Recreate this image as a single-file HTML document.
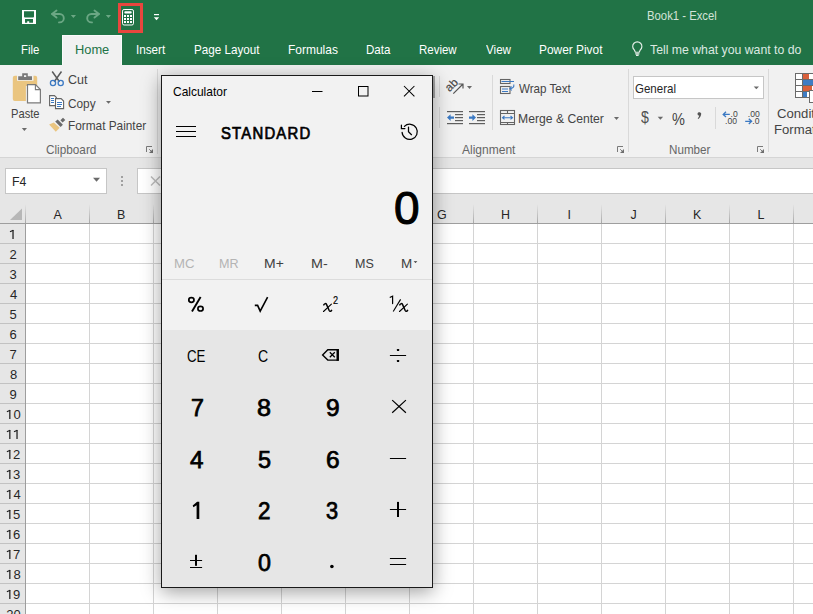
<!DOCTYPE html>
<html><head><meta charset="utf-8"><style>
*{margin:0;padding:0;box-sizing:border-box}
html,body{width:813px;height:614px;overflow:hidden;background:#fff;font-family:"Liberation Sans",sans-serif}
.a{position:absolute}
.t{position:absolute;white-space:nowrap;line-height:1;transform-origin:0 0}
</style></head><body>
<div class="a" style="left:0;top:0;width:813px;height:65px;background:#217346"></div>
<div class="a" style="left:62px;top:35px;width:60px;height:30px;background:#f1f1f1;border:1px solid #fafafa;border-bottom:0"></div>
<div class="a" style="left:0;top:65px;width:813px;height:93px;background:#f1f1f1;border-bottom:1px solid #d5d5d5"></div>
<div class="a" style="left:433px;top:76px;width:2px;height:22px;background:#a6a6a6"></div>
<div class="a" style="left:157px;top:69px;width:1px;height:85px;background:#d9d9d9"></div>
<div class="a" style="left:439px;top:76px;width:1px;height:21px;background:#d9d9d9"></div>
<div class="a" style="left:439px;top:107px;width:1px;height:21px;background:#d9d9d9"></div>
<div class="a" style="left:492px;top:75px;width:1px;height:55px;background:#d9d9d9"></div>
<div class="a" style="left:628px;top:69px;width:1px;height:83px;background:#d9d9d9"></div>
<div class="a" style="left:715px;top:107px;width:1px;height:22px;background:#d9d9d9"></div>
<div class="a" style="left:768px;top:69px;width:1px;height:83px;background:#d9d9d9"></div>
<div class="a" style="left:0;top:158px;width:813px;height:46px;background:#e6e6e6"></div>
<div class="a" style="left:5px;top:168px;width:102px;height:26px;background:#fff;border:1px solid #c6c6c6"></div>
<div class="a" style="left:137px;top:168px;width:690px;height:26px;background:#fff;border:1px solid #c6c6c6"></div>
<div class="a" style="left:633px;top:76px;width:131px;height:23px;background:#fff;border:1px solid #c6c6c6"></div>
<div class="a" style="left:0;top:204px;width:813px;height:20px;background:#e6e6e6;border-bottom:1px solid #9e9e9e"></div>
<div class="a" style="left:0;top:224px;width:26px;height:390px;background:#e6e6e6;border-right:1px solid #9e9e9e"></div>
<div class="a" style="left:89px;top:224px;width:1px;height:390px;background:#d4d4d4"></div>
<div class="a" style="left:89px;top:204px;width:1px;height:19px;background:linear-gradient(#e6e6e6,#a8a8a8)"></div>
<div class="a" style="left:153px;top:224px;width:1px;height:390px;background:#d4d4d4"></div>
<div class="a" style="left:153px;top:204px;width:1px;height:19px;background:linear-gradient(#e6e6e6,#a8a8a8)"></div>
<div class="a" style="left:217px;top:224px;width:1px;height:390px;background:#d4d4d4"></div>
<div class="a" style="left:217px;top:204px;width:1px;height:19px;background:linear-gradient(#e6e6e6,#a8a8a8)"></div>
<div class="a" style="left:281px;top:224px;width:1px;height:390px;background:#d4d4d4"></div>
<div class="a" style="left:281px;top:204px;width:1px;height:19px;background:linear-gradient(#e6e6e6,#a8a8a8)"></div>
<div class="a" style="left:345px;top:224px;width:1px;height:390px;background:#d4d4d4"></div>
<div class="a" style="left:345px;top:204px;width:1px;height:19px;background:linear-gradient(#e6e6e6,#a8a8a8)"></div>
<div class="a" style="left:409px;top:224px;width:1px;height:390px;background:#d4d4d4"></div>
<div class="a" style="left:409px;top:204px;width:1px;height:19px;background:linear-gradient(#e6e6e6,#a8a8a8)"></div>
<div class="a" style="left:473px;top:224px;width:1px;height:390px;background:#d4d4d4"></div>
<div class="a" style="left:473px;top:204px;width:1px;height:19px;background:linear-gradient(#e6e6e6,#a8a8a8)"></div>
<div class="a" style="left:537px;top:224px;width:1px;height:390px;background:#d4d4d4"></div>
<div class="a" style="left:537px;top:204px;width:1px;height:19px;background:linear-gradient(#e6e6e6,#a8a8a8)"></div>
<div class="a" style="left:601px;top:224px;width:1px;height:390px;background:#d4d4d4"></div>
<div class="a" style="left:601px;top:204px;width:1px;height:19px;background:linear-gradient(#e6e6e6,#a8a8a8)"></div>
<div class="a" style="left:665px;top:224px;width:1px;height:390px;background:#d4d4d4"></div>
<div class="a" style="left:665px;top:204px;width:1px;height:19px;background:linear-gradient(#e6e6e6,#a8a8a8)"></div>
<div class="a" style="left:729px;top:224px;width:1px;height:390px;background:#d4d4d4"></div>
<div class="a" style="left:729px;top:204px;width:1px;height:19px;background:linear-gradient(#e6e6e6,#a8a8a8)"></div>
<div class="a" style="left:793px;top:224px;width:1px;height:390px;background:#d4d4d4"></div>
<div class="a" style="left:793px;top:204px;width:1px;height:19px;background:linear-gradient(#e6e6e6,#a8a8a8)"></div>
<div class="a" style="left:26px;top:243px;width:787px;height:1px;background:#d4d4d4"></div>
<div class="a" style="left:0;top:243px;width:25px;height:1px;background:#c2c2c2"></div>
<div class="a" style="left:26px;top:263px;width:787px;height:1px;background:#d4d4d4"></div>
<div class="a" style="left:0;top:263px;width:25px;height:1px;background:#c2c2c2"></div>
<div class="a" style="left:26px;top:283px;width:787px;height:1px;background:#d4d4d4"></div>
<div class="a" style="left:0;top:283px;width:25px;height:1px;background:#c2c2c2"></div>
<div class="a" style="left:26px;top:303px;width:787px;height:1px;background:#d4d4d4"></div>
<div class="a" style="left:0;top:303px;width:25px;height:1px;background:#c2c2c2"></div>
<div class="a" style="left:26px;top:323px;width:787px;height:1px;background:#d4d4d4"></div>
<div class="a" style="left:0;top:323px;width:25px;height:1px;background:#c2c2c2"></div>
<div class="a" style="left:26px;top:343px;width:787px;height:1px;background:#d4d4d4"></div>
<div class="a" style="left:0;top:343px;width:25px;height:1px;background:#c2c2c2"></div>
<div class="a" style="left:26px;top:363px;width:787px;height:1px;background:#d4d4d4"></div>
<div class="a" style="left:0;top:363px;width:25px;height:1px;background:#c2c2c2"></div>
<div class="a" style="left:26px;top:383px;width:787px;height:1px;background:#d4d4d4"></div>
<div class="a" style="left:0;top:383px;width:25px;height:1px;background:#c2c2c2"></div>
<div class="a" style="left:26px;top:403px;width:787px;height:1px;background:#d4d4d4"></div>
<div class="a" style="left:0;top:403px;width:25px;height:1px;background:#c2c2c2"></div>
<div class="a" style="left:26px;top:423px;width:787px;height:1px;background:#d4d4d4"></div>
<div class="a" style="left:0;top:423px;width:25px;height:1px;background:#c2c2c2"></div>
<div class="a" style="left:26px;top:443px;width:787px;height:1px;background:#d4d4d4"></div>
<div class="a" style="left:0;top:443px;width:25px;height:1px;background:#c2c2c2"></div>
<div class="a" style="left:26px;top:463px;width:787px;height:1px;background:#d4d4d4"></div>
<div class="a" style="left:0;top:463px;width:25px;height:1px;background:#c2c2c2"></div>
<div class="a" style="left:26px;top:483px;width:787px;height:1px;background:#d4d4d4"></div>
<div class="a" style="left:0;top:483px;width:25px;height:1px;background:#c2c2c2"></div>
<div class="a" style="left:26px;top:503px;width:787px;height:1px;background:#d4d4d4"></div>
<div class="a" style="left:0;top:503px;width:25px;height:1px;background:#c2c2c2"></div>
<div class="a" style="left:26px;top:523px;width:787px;height:1px;background:#d4d4d4"></div>
<div class="a" style="left:0;top:523px;width:25px;height:1px;background:#c2c2c2"></div>
<div class="a" style="left:26px;top:543px;width:787px;height:1px;background:#d4d4d4"></div>
<div class="a" style="left:0;top:543px;width:25px;height:1px;background:#c2c2c2"></div>
<div class="a" style="left:26px;top:563px;width:787px;height:1px;background:#d4d4d4"></div>
<div class="a" style="left:0;top:563px;width:25px;height:1px;background:#c2c2c2"></div>
<div class="a" style="left:26px;top:583px;width:787px;height:1px;background:#d4d4d4"></div>
<div class="a" style="left:0;top:583px;width:25px;height:1px;background:#c2c2c2"></div>
<div class="a" style="left:26px;top:603px;width:787px;height:1px;background:#d4d4d4"></div>
<div class="a" style="left:0;top:603px;width:25px;height:1px;background:#c2c2c2"></div>
<div class="a" style="left:26px;top:623px;width:787px;height:1px;background:#d4d4d4"></div>
<div class="a" style="left:0;top:623px;width:25px;height:1px;background:#c2c2c2"></div>
<div class="a" style="left:25px;top:204px;width:1px;height:19px;background:linear-gradient(#e6e6e6,#a8a8a8)"></div>
<svg class="a" style="left:0;top:228px" width="25" height="13"><rect x="12.4" y="2" width="1.25" height="9" fill="#1e1e1e"/><path d="M10.0 3.8L13.3 2.2" stroke="#1e1e1e" stroke-width="1.15"/></svg>
<svg class="a" style="left:0;top:408px" width="25" height="13"><rect x="9.2" y="2" width="1.25" height="9" fill="#1e1e1e"/><path d="M6.9 3.8L10.1 2.2" stroke="#1e1e1e" stroke-width="1.15"/></svg>
<svg class="a" style="left:0;top:428px" width="25" height="13"><rect x="9.2" y="2" width="1.25" height="9" fill="#1e1e1e"/><path d="M6.9 3.8L10.1 2.2" stroke="#1e1e1e" stroke-width="1.15"/></svg>
<svg class="a" style="left:0;top:428px" width="25" height="13"><rect x="16.4" y="2" width="1.25" height="9" fill="#1e1e1e"/><path d="M14.0 3.8L17.299999999999997 2.2" stroke="#1e1e1e" stroke-width="1.15"/></svg>
<svg class="a" style="left:0;top:448px" width="25" height="13"><rect x="9.2" y="2" width="1.25" height="9" fill="#1e1e1e"/><path d="M6.9 3.8L10.1 2.2" stroke="#1e1e1e" stroke-width="1.15"/></svg>
<svg class="a" style="left:0;top:468px" width="25" height="13"><rect x="9.2" y="2" width="1.25" height="9" fill="#1e1e1e"/><path d="M6.9 3.8L10.1 2.2" stroke="#1e1e1e" stroke-width="1.15"/></svg>
<svg class="a" style="left:0;top:488px" width="25" height="13"><rect x="9.2" y="2" width="1.25" height="9" fill="#1e1e1e"/><path d="M6.9 3.8L10.1 2.2" stroke="#1e1e1e" stroke-width="1.15"/></svg>
<svg class="a" style="left:0;top:508px" width="25" height="13"><rect x="9.2" y="2" width="1.25" height="9" fill="#1e1e1e"/><path d="M6.9 3.8L10.1 2.2" stroke="#1e1e1e" stroke-width="1.15"/></svg>
<svg class="a" style="left:0;top:528px" width="25" height="13"><rect x="9.2" y="2" width="1.25" height="9" fill="#1e1e1e"/><path d="M6.9 3.8L10.1 2.2" stroke="#1e1e1e" stroke-width="1.15"/></svg>
<svg class="a" style="left:0;top:548px" width="25" height="13"><rect x="9.2" y="2" width="1.25" height="9" fill="#1e1e1e"/><path d="M6.9 3.8L10.1 2.2" stroke="#1e1e1e" stroke-width="1.15"/></svg>
<svg class="a" style="left:0;top:568px" width="25" height="13"><rect x="9.2" y="2" width="1.25" height="9" fill="#1e1e1e"/><path d="M6.9 3.8L10.1 2.2" stroke="#1e1e1e" stroke-width="1.15"/></svg>
<svg class="a" style="left:0;top:588px" width="25" height="13"><rect x="9.2" y="2" width="1.25" height="9" fill="#1e1e1e"/><path d="M6.9 3.8L10.1 2.2" stroke="#1e1e1e" stroke-width="1.15"/></svg>
<svg class="a" style="left:0;top:204px" width="26" height="20"><polygon points="22,4.5 22,16 10,16" fill="#b7b7b7"/></svg>
<div class="t" style="left:646.92px;top:9.80px;font-size:12.9px;transform:scaleX(0.878);color:#d3e3d8;">Book1 - Excel</div>
<div class="t" style="left:20.62px;top:43.20px;font-size:13.04px;transform:scaleX(0.875);color:#ffffff;">File</div>
<div class="t" style="left:136.40px;top:43.20px;font-size:13.04px;transform:scaleX(0.897);color:#ffffff;">Insert</div>
<div class="t" style="left:194.10px;top:43.20px;font-size:13.04px;transform:scaleX(0.896);color:#ffffff;">Page Layout</div>
<div class="t" style="left:288.08px;top:43.20px;font-size:13.04px;transform:scaleX(0.919);color:#ffffff;">Formulas</div>
<div class="t" style="left:366.11px;top:43.20px;font-size:13.04px;transform:scaleX(0.889);color:#ffffff;">Data</div>
<div class="t" style="left:419.12px;top:43.20px;font-size:13.04px;transform:scaleX(0.881);color:#ffffff;">Review</div>
<div class="t" style="left:486.00px;top:43.20px;font-size:13.04px;transform:scaleX(0.893);color:#ffffff;">View</div>
<div class="t" style="left:539.09px;top:43.20px;font-size:13.04px;transform:scaleX(0.913);color:#ffffff;">Power Pivot</div>
<div class="t" style="left:74.52px;top:43.00px;font-size:13.04px;transform:scaleX(0.985);color:#217346;">Home</div>
<div class="t" style="left:649.50px;top:43.20px;font-size:13.04px;transform:scaleX(0.941);color:#dde9e1;">Tell me what you want to do</div>
<div class="t" style="left:10.74px;top:107.00px;font-size:13.04px;transform:scaleX(0.856);color:#444444;">Paste</div>
<div class="t" style="left:67.64px;top:73.00px;font-size:13.04px;transform:scaleX(0.958);color:#444444;">Cut</div>
<div class="t" style="left:67.69px;top:96.50px;font-size:13.04px;transform:scaleX(0.907);color:#444444;">Copy</div>
<div class="t" style="left:67.69px;top:119.40px;font-size:13.04px;transform:scaleX(0.907);color:#444444;">Format Painter</div>
<div class="t" style="left:45.60px;top:143.50px;font-size:12.32px;transform:scaleX(0.956);color:#666666;">Clipboard</div>
<div class="t" style="left:519.00px;top:81.50px;font-size:13.04px;transform:scaleX(0.891);color:#444444;">Wrap Text</div>
<div class="t" style="left:518.07px;top:112.00px;font-size:13.04px;transform:scaleX(0.934);color:#444444;">Merge &amp; Center</div>
<div class="t" style="left:462.00px;top:144.00px;font-size:12.03px;color:#666666;">Alignment</div>
<div class="t" style="left:635.12px;top:81.50px;font-size:13.04px;transform:scaleX(0.884);color:#262626;">General</div>
<div class="t" style="left:669.33px;top:144.00px;font-size:12.03px;transform:scaleX(0.969);color:#666666;">Number</div>
<div class="t" style="left:777.37px;top:108.30px;font-size:12.75px;transform:scaleX(1.030);color:#444444;">Condit</div>
<div class="t" style="left:774.37px;top:124.00px;font-size:12.75px;transform:scaleX(1.030);color:#444444;">Format</div>
<div class="t" style="left:640.70px;top:109.20px;font-size:16.5px;transform:scaleX(0.856);color:#505050;">$</div>
<div class="t" style="left:672.20px;top:110.50px;font-size:17.25px;transform:scaleX(0.840);color:#444444;">%</div>
<div class="t" style="left:11.54px;top:176.20px;font-size:12.75px;transform:scaleX(0.964);color:#262626;">F4</div>
<div class="t" style="left:53.50px;top:208.60px;font-size:12.46px;color:#262626;">A</div>
<div class="t" style="left:117.00px;top:208.60px;font-size:12.46px;color:#262626;">B</div>
<div class="t" style="left:181.50px;top:208.60px;font-size:12.46px;color:#262626;">C</div>
<div class="t" style="left:244.50px;top:208.60px;font-size:12.46px;color:#262626;">D</div>
<div class="t" style="left:309.00px;top:208.60px;font-size:12.46px;color:#262626;">E</div>
<div class="t" style="left:373.50px;top:208.60px;font-size:12.46px;color:#262626;">F</div>
<div class="t" style="left:437.00px;top:208.60px;font-size:12.46px;color:#262626;">G</div>
<div class="t" style="left:501.00px;top:208.60px;font-size:12.46px;color:#262626;">H</div>
<div class="t" style="left:567.50px;top:208.60px;font-size:12.46px;color:#262626;">I</div>
<div class="t" style="left:630.50px;top:208.60px;font-size:12.46px;color:#262626;">J</div>
<div class="t" style="left:693.00px;top:208.60px;font-size:12.46px;color:#262626;">K</div>
<div class="t" style="left:757.50px;top:208.60px;font-size:12.46px;color:#262626;">L</div>
<div class="t" style="left:820.00px;top:208.60px;font-size:12.46px;color:#262626;">M</div>
<div class="t" style="left:9.50px;top:248.00px;font-size:13.04px;color:#262626;">2</div>
<div class="t" style="left:9.50px;top:268.00px;font-size:13.04px;color:#262626;">3</div>
<div class="t" style="left:10.00px;top:288.00px;font-size:13.04px;color:#262626;">4</div>
<div class="t" style="left:9.50px;top:308.00px;font-size:13.04px;color:#262626;">5</div>
<div class="t" style="left:9.50px;top:328.00px;font-size:13.04px;color:#262626;">6</div>
<div class="t" style="left:9.50px;top:348.00px;font-size:13.04px;color:#262626;">7</div>
<div class="t" style="left:10.00px;top:368.00px;font-size:13.04px;color:#262626;">8</div>
<div class="t" style="left:9.50px;top:388.00px;font-size:13.04px;color:#262626;">9</div>
<div class="t" style="left:13.40px;top:408.00px;font-size:13.04px;color:#262626;">0</div>
<div class="t" style="left:12.90px;top:448.00px;font-size:13.04px;color:#262626;">2</div>
<div class="t" style="left:12.90px;top:468.00px;font-size:13.04px;color:#262626;">3</div>
<div class="t" style="left:13.40px;top:488.00px;font-size:13.04px;color:#262626;">4</div>
<div class="t" style="left:12.90px;top:508.00px;font-size:13.04px;color:#262626;">5</div>
<div class="t" style="left:12.90px;top:528.00px;font-size:13.04px;color:#262626;">6</div>
<div class="t" style="left:12.90px;top:548.00px;font-size:13.04px;color:#262626;">7</div>
<div class="t" style="left:13.40px;top:568.00px;font-size:13.04px;color:#262626;">8</div>
<div class="t" style="left:12.90px;top:588.00px;font-size:13.04px;color:#262626;">9</div>
<div class="t" style="left:6.20px;top:608.00px;font-size:13.04px;color:#262626;">2</div>
<div class="t" style="left:13.40px;top:608.00px;font-size:13.04px;color:#262626;">0</div>
<svg class="a" style="left:0;top:0" width="200" height="35"><path fill="#fff" fill-rule="evenodd" d="M22 10h14v14H22z M24 11.2v5.6l0.6 0.6h8.8l0.6-0.6v-5.6z M25 19v3.8h2.2v-1.5h2v1.5H33V19z"/><g fill="none" stroke="#6ba784" stroke-width="1.9" stroke-linecap="round" stroke-linejoin="round"><path d="M56.5 10.6L52 14l4.5 3.6"/><path d="M52.3 14H59.6a4.2 4.2 0 0 1 0 8.4H59"/><path d="M94.5 10.6L99 14l-4.5 3.6"/><path d="M98.7 14H91.4a4.2 4.2 0 0 0 0 8.4H92"/></g><path fill="#6ba784" d="M70.8 15h5.2l-2.6 3z M105.8 15h5.2l-2.6 3z"/><rect x="122.5" y="9.5" width="11" height="15.5" rx="1.6" fill="none" stroke="#fff" stroke-width="1"/><rect x="124.3" y="11.2" width="7.4" height="2.4" rx="1" fill="#fff"/><g fill="#fff"><rect x="124" y="15" width="2" height="2"/><rect x="127" y="15" width="2" height="2"/><rect x="130" y="15" width="2" height="2"/><rect x="124" y="18" width="2" height="2"/><rect x="127" y="18" width="2" height="2"/><rect x="130" y="18" width="2" height="2"/><rect x="124" y="21" width="2" height="2"/><rect x="127" y="21" width="2" height="2"/><rect x="130" y="21" width="2" height="2"/></g><rect x="119.5" y="4.5" width="22" height="27" fill="none" stroke="#e9463e" stroke-width="3"/><rect x="154" y="14" width="5" height="1.2" fill="#fff"/><path fill="#fff" d="M153.8 17.3h5.4l-2.7 3z"/></svg>
<svg class="a" style="left:628px;top:40px" width="18" height="20"><path d="M6.3 9.9A4.6 4.6 0 1 1 12.3 9.9L11.2 12.2H7.4Z M7.2 13.9H11.4 M8 15.4H10.6" fill="none" stroke="#e6efe9" stroke-width="1.15"/></svg>
<svg class="a" style="left:0;top:65px" width="160" height="93"><path fill="#eac580" d="M14.8 10.8h2.2v5h16.5v-5h1.7a2 2 0 0 1 2 2v8.2h-11.3v15h-11.1a2 2 0 0 1-2-2v-21.2a2 2 0 0 1 2-2z"/><path fill="#787878" d="M18.2 11.2h4v-3h5.6v3h4.2v3.7h-13.8z"/><rect x="24" y="10.2" width="2.2" height="1.8" fill="#f1f1f1"/><path fill="#fff" stroke="#7a7a7a" stroke-width="1.2" d="M27.5 19.6h8l4.9 4.9v13.4h-12.9z"/><path fill="none" stroke="#7a7a7a" stroke-width="1.1" d="M35.4 19.6v5h5"/><path fill="#6a6a6a" d="M21.8 63h5.2l-2.6 3z"/><path fill="none" stroke="#5a5a5a" stroke-width="1.5" d="M52.2 6.5L59.5 16.8 M61.5 6.5L54.2 16.8"/><circle cx="53" cy="18" r="2.6" fill="none" stroke="#3b79c3" stroke-width="1.3"/><circle cx="60.7" cy="18" r="2.6" fill="none" stroke="#3b79c3" stroke-width="1.3"/><path fill="#fff" stroke="#646464" stroke-width="1.1" d="M49.6 30.6h4.8l2 2v8h-6.8z"/><path fill="#3b79c3" d="M51 33h3v1h-3z M51 35h3v1h-3z M51 37h3v1h-3z"/><path fill="#fff" stroke="#646464" stroke-width="1.1" d="M55.5 33.6h5.6l2.5 2.5v7.5h-8.1z"/><path fill="#3b79c3" d="M57 37h5v1h-5z M57 39h5v1h-5z M57 41h4v1h-4z"/><path fill="#6a6a6a" d="M106 36h5l-2.5 2.8z"/><path fill="#eac580" d="M49.1 59.4L53.8 57.6L59.7 62.7L55.8 66.8Z"/><path fill="#6a6a6a" d="M55.2 56.6L57.7 54.6L62.9 59.8L60.6 62Z M60.4 55.3L63 52.8L65.3 55.1L62.6 57.6Z"/><path fill="none" stroke="#7a7a7a" stroke-width="1" d="M146.5 87V81.5H152"/><path fill="#6e6e6e" d="M153 84v4h-4z"/><path stroke="#6e6e6e" stroke-width="0.9" d="M149.2 84.2l2.5 2.5"/></svg>
<svg class="a" style="left:430px;top:65px" width="383" height="93"><text x="0" y="0" transform="translate(19.6 27.2) rotate(-45)" font-family="Liberation Sans" font-size="11.6" fill="#4a4a4a" stroke="#4a4a4a" stroke-width="0.2">ab</text><path fill="none" stroke="#555" stroke-width="1.2" d="M23.3 28.7L33 19 M28.5 19H33v4.5"/><path fill="#6a6a6a" d="M37 21h5l-2.5 3z"/><g fill="#5f5f5f"><rect x="17" y="46" width="16" height="1.2"/><rect x="25" y="49" width="8" height="1.2"/><rect x="25" y="52" width="8" height="1.2"/><rect x="25" y="55" width="8" height="1.2"/><rect x="17" y="58" width="16" height="1.2"/><rect x="39" y="46" width="16" height="1.2"/><rect x="47" y="49" width="8" height="1.2"/><rect x="47" y="52" width="8" height="1.2"/><rect x="47" y="55" width="8" height="1.2"/><rect x="39" y="58" width="16" height="1.2"/></g><path fill="#3b79c3" d="M17 52.5l3.6-3.2v2.1h3.4v2.4h-3.4v2.1z M46 52.5l-3.6-3.2v2.1h-3.4v2.4h3.4v2.1z"/><g fill="none" stroke="#646464" stroke-width="1.1"><rect x="70.5" y="14.5" width="9.5" height="4"/><rect x="70.5" y="21.5" width="9.5" height="7"/></g><g fill="#3b79c3"><rect x="71.5" y="16" width="12.5" height="1"/><rect x="72" y="23.5" width="6" height="1"/><rect x="72" y="26" width="6" height="1"/></g><path fill="none" stroke="#3b79c3" stroke-width="1.1" d="M83.8 19.5c0.5 2.5-1 4-3.8 4.2 M81.6 21.5L79.8 23.6l2 1.8"/><g fill="none" stroke="#646464" stroke-width="1.1"><rect x="70.5" y="45.5" width="14" height="14"/><path d="M70.5 48.5h14 M70.5 57.5h14 M77.5 45.5v3 M77.5 57.5v2"/></g><path fill="none" stroke="#3b79c3" stroke-width="1.1" d="M72.5 52.7h10 M74.5 51l-2 1.7l2 1.7 M80.5 51l2 1.7l-2 1.7"/><path fill="#6a6a6a" d="M184 52h5l-2.5 3z"/><path fill="none" stroke="#7a7a7a" stroke-width="1" d="M187.5 87V81.5H193"/><path fill="#6e6e6e" d="M194 84v4h-4z"/><path stroke="#6e6e6e" stroke-width="0.9" d="M190.2 84.2l2.5 2.5"/><path fill="none" stroke="#7a7a7a" stroke-width="1" d="M327.5 87V81.5H333"/><path fill="#6e6e6e" d="M334 84v4h-4z"/><path stroke="#6e6e6e" stroke-width="0.9" d="M330.2 84.2l2.5 2.5"/><path fill="#6a6a6a" d="M323.7 21.5h5.3l-2.65 2.7z"/><path fill="#6a6a6a" d="M227.7 51.8h5.4l-2.7 3z"/><path fill="#555" d="M267.5 48.6a1.9 1.9 0 1 1 3.6 1.2c-0.4 1.7-1.6 3.4-2.8 4.2l-0.6-0.6c0.8-0.8 1.4-1.7 1.5-2.6a1.9 1.9 0 0 1-1.7-2.2z"/><text x="300.5" y="52.2" font-family="Liberation Sans" font-size="8.6" fill="#444">.0</text><text x="295" y="59" font-family="Liberation Sans" font-size="8.6" fill="#444">.00</text><text x="317.8" y="52.2" font-family="Liberation Sans" font-size="8.6" fill="#444">.00</text><text x="322.3" y="59" font-family="Liberation Sans" font-size="8.6" fill="#444">.0</text><path fill="none" stroke="#3b79c3" stroke-width="1.3" d="M293 49.4h6.8 M296 46.8l-2.8 2.6l2.8 2.6 M315.2 56.3h6.5 M318.8 53.7l2.8 2.6l-2.8 2.6"/><rect x="365.5" y="8.5" width="20" height="24" fill="#fff" stroke="#6a6a6a" stroke-width="1"/><path fill="none" stroke="#6a6a6a" stroke-width="1" d="M365.5 14.5h20 M365.5 20.5h20 M365.5 26.5h20 M372.5 8.5v24"/><rect x="373" y="9" width="6" height="5" fill="#d9603b"/><rect x="373" y="15" width="12" height="5" fill="#3e7cc4"/><rect x="373" y="21" width="9" height="5" fill="#d9603b"/><rect x="373" y="27" width="4" height="5" fill="#3e7cc4"/><rect x="379.5" y="25.5" width="10" height="12" fill="#fff" stroke="#6a6a6a" stroke-width="1"/></svg>
<svg class="a" style="left:0;top:158px" width="170" height="46"><path fill="#6a6a6a" d="M93 19.8h7l-3.5 4z"/><g fill="#a0a0a0"><rect x="121" y="18" width="2" height="2"/><rect x="121" y="22" width="2" height="2"/><rect x="121" y="26" width="2" height="2"/></g><path fill="none" stroke="#bdbdbd" stroke-width="1.5" d="M151 18.5l9 9 M160 18.5l-9 9"/></svg>
<div class="a" style="left:161px;top:75px;width:272px;height:513px;background:#f2f2f2;border:1px solid #1a1a1a;box-shadow:0 4px 18px rgba(0,0,0,.38)"></div>
<div class="a" style="left:162px;top:330px;width:270px;height:257px;background:#e6e6e6"></div>
<div class="a" style="left:162px;top:279px;width:270px;height:1px;background:#dcdcdc"></div>
<div class="t" style="left:173.10px;top:85.00px;font-size:13.33px;transform:scaleX(0.898);color:#000000;">Calculator</div>
<div class="t" style="left:221.28px;top:124.80px;font-size:16.23px;letter-spacing:1.3px;transform:scaleX(0.918);color:#000000;-webkit-text-stroke:0.7px #000;">STANDARD</div>
<div class="t" style="left:394.02px;top:185.40px;font-size:46.38px;transform:scaleX(0.991);color:#000000;-webkit-text-stroke:1.1px #000;">0</div>
<div class="t" style="left:174.29px;top:257.10px;font-size:13.04px;transform:scaleX(1.011);color:#b4b4b4;">MC</div>
<div class="t" style="left:219.03px;top:257.10px;font-size:13.04px;transform:scaleX(0.968);color:#b4b4b4;">MR</div>
<div class="t" style="left:263.93px;top:257.10px;font-size:13.04px;transform:scaleX(1.071);color:#404040;">M+</div>
<div class="t" style="left:310.90px;top:257.10px;font-size:13.04px;transform:scaleX(1.100);color:#404040;">M-</div>
<div class="t" style="left:355.34px;top:257.10px;font-size:13.04px;transform:scaleX(0.961);color:#404040;">MS</div>
<div class="t" style="left:186.75px;top:349.10px;font-size:15.65px;transform:scaleX(0.850);color:#000000;">CE</div>
<div class="t" style="left:258.40px;top:349.10px;font-size:15.65px;transform:scaleX(0.900);color:#000000;">C</div>
<div class="t" style="left:400.67px;top:257.40px;font-size:13.04px;transform:scaleX(1.033);color:#404040;">M</div>
<div class="t" style="left:333.30px;top:295.00px;font-size:11px;transform:scaleX(0.833);color:#000000;-webkit-text-stroke:0.15px #000;">2</div>
<div class="t" style="left:190.79px;top:397.10px;font-size:23.04px;transform:scaleX(1.009);color:#000000;-webkit-text-stroke:0.75px #000;">7</div>
<div class="t" style="left:257.21px;top:397.10px;font-size:23.04px;transform:scaleX(1.091);color:#000000;-webkit-text-stroke:0.75px #000;">8</div>
<div class="t" style="left:325.54px;top:397.10px;font-size:23.04px;transform:scaleX(1.064);color:#000000;-webkit-text-stroke:0.75px #000;">9</div>
<div class="t" style="left:190.40px;top:448.60px;font-size:23.04px;transform:scaleX(1.050);color:#000000;-webkit-text-stroke:0.75px #000;">4</div>
<div class="t" style="left:257.78px;top:448.60px;font-size:23.04px;transform:scaleX(1.018);color:#000000;-webkit-text-stroke:0.75px #000;">5</div>
<div class="t" style="left:325.54px;top:448.60px;font-size:23.04px;transform:scaleX(1.064);color:#000000;-webkit-text-stroke:0.75px #000;">6</div>
<div class="t" style="left:258.13px;top:500.10px;font-size:23.04px;transform:scaleX(0.973);color:#000000;-webkit-text-stroke:0.75px #000;">2</div>
<div class="t" style="left:326.25px;top:500.10px;font-size:23.04px;transform:scaleX(0.945);color:#000000;-webkit-text-stroke:0.75px #000;">3</div>
<div class="t" style="left:258.09px;top:551.60px;font-size:23.04px;transform:scaleX(1.009);color:#000000;-webkit-text-stroke:0.75px #000;">0</div>
<svg class="a" style="left:161px;top:75px" width="272" height="513"><rect x="151" y="16" width="10.5" height="1" fill="#000"/><rect x="197.5" y="11.5" width="9.5" height="9.5" fill="none" stroke="#000" stroke-width="1"/><path fill="none" stroke="#000" stroke-width="1.05" d="M243 11l10.4 10.4 M253.4 11L243 21.4"/><g fill="#000"><rect x="15" y="51" width="20" height="1"/><rect x="15" y="56" width="20" height="1"/><rect x="15" y="61" width="20" height="1"/></g><g fill="none" stroke="#000" stroke-width="1.25" stroke-linecap="round"><path d="M241.1 57.3A7.6 7.6 0 1 0 243.4 51.4"/><path d="M240.4 50.2v3.3h3.5"/><path d="M247.5 52.1v4.7l3 2.9"/></g><path fill="none" stroke="#000" stroke-width="1.6" stroke-linejoin="miter" d="M93.8 230.4H96.6L99.2 236.2L106.6 222.2"/><path fill="none" stroke="#000" stroke-width="1.4" d="M177 274.7h-10.2l-5.2 5.2l5.2 5.2h10.2z"/><rect x="175.5" y="274" width="2.4" height="11.8" fill="#000"/><path fill="none" stroke="#000" stroke-width="1.25" d="M168.8 277.3l5 5 M173.8 277.3l-5 5"/><rect x="228.9" y="280" width="16.2" height="1" fill="#000"/><rect x="235.9" y="274.1" width="2.3" height="1.9" rx="0.4" fill="#000"/><rect x="235.9" y="285" width="2.3" height="1.9" rx="0.4" fill="#000"/><path fill="none" stroke="#000" stroke-width="1.2" d="M231.2 325.1L244.9 337.8 M244.9 325.1L231.2 337.8"/><rect x="228.9" y="383" width="16.2" height="1" fill="#000"/><rect x="228.9" y="434" width="16.2" height="1" fill="#000"/><rect x="236" y="426.9" width="2" height="15.1" fill="#000"/><rect x="29" y="485" width="12.1" height="1" fill="#000"/><rect x="34" y="479.8" width="2" height="11" fill="#000"/><rect x="29" y="492" width="12.1" height="1" fill="#000"/><circle cx="170.9" cy="491.5" r="1.8" fill="#000"/><rect x="228.9" y="483" width="16.2" height="1" fill="#000"/><rect x="228.9" y="489" width="16.2" height="1" fill="#000"/><path fill="#000" d="M35.6 443.9V430.3L32.4 432.3L31.7 430.4L36.1 426.8H38.3V443.9Z"/><g fill="none" stroke="#000" stroke-width="1.7"><ellipse cx="30.4" cy="225" rx="2.6" ry="2.3"/><ellipse cx="39.5" cy="233.7" rx="2.6" ry="2.3"/></g><path stroke="#000" stroke-width="1.9" d="M39.6 222L31 236.6"/><path stroke="#000" stroke-width="1.1" d="M239.6 224.4L232.2 236.5"/><g fill="none" stroke="#000" stroke-linecap="round"><path stroke-width="1.5" d="M162.8 229.9C163.6 228.4 164.9 228.1 165.6 229.6L168.2 235.5C168.8 236.7 169.9 236.6 170.6 235.3"/><path stroke-width="1.1" d="M170.4 229.1L162.5 236.5"/><path stroke-width="1.5" d="M238.8 229.9C239.6 228.4 240.9 228.1 241.6 229.6L244.2 235.5C244.8 236.7 245.9 236.6 246.6 235.3"/><path stroke-width="1.1" d="M246.4 229.1L238.5 236.5"/><path stroke-width="1.2" d="M229.2 222.3L231.6 221.2V228.6"/></g><path fill="#333" d="M252.6 186.3h3.8l-1.9 1.7z"/></svg>
</body></html>
